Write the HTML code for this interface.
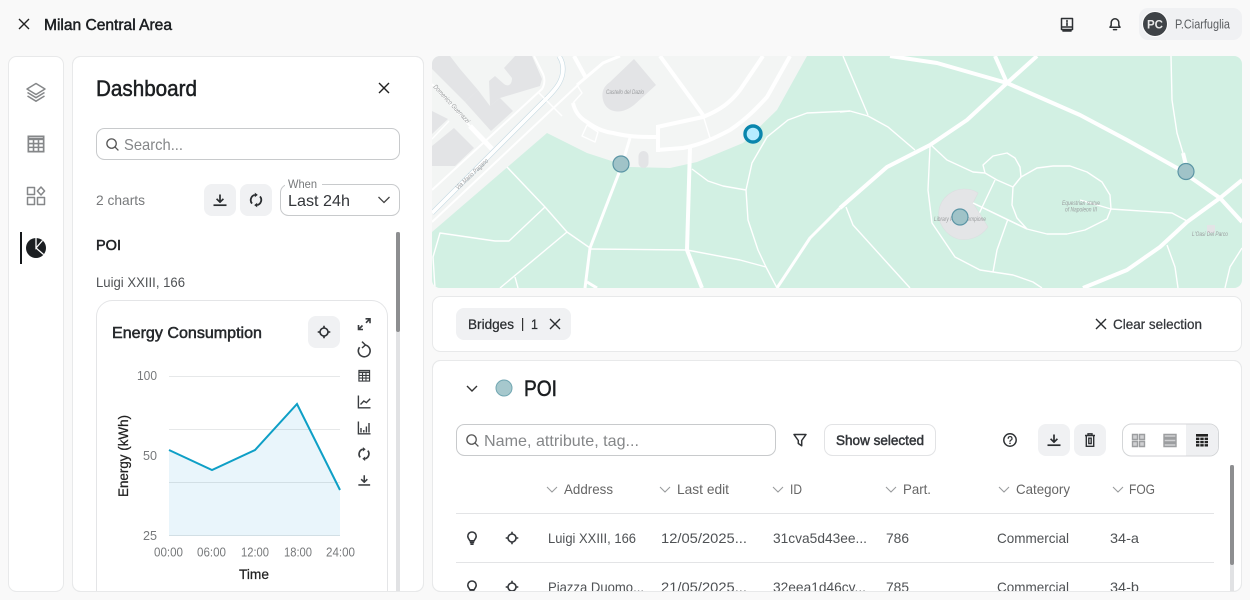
<!DOCTYPE html>
<html lang="en"><head><meta charset="utf-8"><title>Milan Central Area</title>
<style>
html,body{margin:0;padding:0;background:#f9f9f9;width:1250px;height:600px;overflow:hidden}
svg{display:block;font-family:"Liberation Sans",sans-serif}
.m{stroke:currentColor;stroke-width:.25}
.s{stroke:currentColor;stroke-width:.5}
.h{fill:#666;font-size:14px}
.c{fill:#4f5255;font-size:14px}
.ic{fill:none;stroke:#2e3134;stroke-width:1.5;stroke-linecap:round;stroke-linejoin:round}
.g{fill:none;stroke:#858789;stroke-width:1.5;stroke-linejoin:round}
.r4{fill:none;stroke:#fff;stroke-width:4;stroke-linejoin:round;stroke-linecap:butt}
.r3{fill:none;stroke:#fff;stroke-width:3;stroke-linejoin:round}
.r2{fill:none;stroke:#fff;stroke-width:2;stroke-linejoin:round}
.r1{fill:none;stroke:#fff;stroke-width:1.4;stroke-linejoin:round}
.b{fill:#e3e4e6}
.mt{fill:#9a9c9e;font-size:6.5px;font-style:italic}
.btn{fill:#f0f1f3}
.box{fill:#fff;stroke:#c8cacc}
.p{fill:#fff;stroke:#e8e9ea}
</style></head>
<body>
<svg width="1250" height="600" viewBox="0 0 1250 600" xmlns="http://www.w3.org/2000/svg">
<defs>
<clipPath id="mapc"><rect x="432" y="56" width="810" height="232" rx="8"/></clipPath>
<clipPath id="panc"><rect x="72" y="56" width="352" height="535" rx="8"/></clipPath>
<clipPath id="tabc"><rect x="432" y="360" width="810" height="231" rx="8"/></clipPath>
<symbol id="dl" viewBox="0 0 16 16" overflow="visible"><path d="M8 2.5V10M4.6 6.8L8 10.2 11.4 6.8" fill="none" stroke="currentColor" stroke-width="1.7" stroke-linejoin="round"/><path d="M1.5 13.2H14.5" stroke="currentColor" stroke-width="1.7" fill="none"/></symbol>
<symbol id="rf" viewBox="0 0 16 16" overflow="visible"><path d="M4 11.6A5.4 5.4 0 0 1 6.8 2.9M12 4.4A5.4 5.4 0 0 1 9.2 13.1" fill="none" stroke="currentColor" stroke-width="1.8"/><path d="M6.8 .6L9.8 2.9 6.8 5.3ZM9.2 10.7L6.2 13.1 9.2 15.4Z" fill="currentColor"/></symbol>
<symbol id="tg" viewBox="0 0 16 16" overflow="visible"><circle cx="8" cy="8" r="4" fill="none" stroke="currentColor" stroke-width="1.6"/><path d="M8 1.7V4M8 12V14.3M1.7 8H4M12 8H14.3" stroke="currentColor" stroke-width="1.6" fill="none"/></symbol>
<symbol id="bu" viewBox="0 0 16 16" overflow="visible"><path d="M5.8 10.8C5.6 9.5 3.8 8.6 3.8 6.2A4.2 4.2 0 0 1 12.2 6.2C12.2 8.6 10.4 9.5 10.2 10.8Z" fill="none" stroke="currentColor" stroke-width="1.6" stroke-linejoin="round"/><path d="M5.8 12.4H10.2M6.4 14.2H9.6" stroke="currentColor" stroke-width="1.6" fill="none"/></symbol>
<symbol id="xx" viewBox="0 0 16 16" overflow="visible"><path d="M3 3L13 13M13 3L3 13" stroke="currentColor" stroke-width="1.4" fill="none"/></symbol>
<symbol id="ta" viewBox="0 0 16 16" overflow="visible"><path d="M1.2 1.2H14.8V14.8H1.2Z" fill="none" stroke="currentColor" stroke-width="1.5"/><path d="M1.2 2.5H14.8V4.6H1.2Z" fill="currentColor"/><path d="M1.2 7.6H14.8M1.2 11H14.8M5.8 4.3V14.8M10.2 4.3V14.8" fill="none" stroke="currentColor" stroke-width="1.4"/></symbol>
<symbol id="se" viewBox="0 0 16 16" overflow="visible"><circle cx="7" cy="7" r="5" fill="none" stroke="currentColor" stroke-width="1.4"/><path d="M10.6 10.6L14.3 14.3" stroke="currentColor" stroke-width="1.4"/></symbol>
</defs>

<rect width="1250" height="600" fill="#f9f9f9"/>

<!-- top bar -->
<use href="#xx" x="16" y="16" width="16" height="16" color="#222"/>
<text x="44" y="30" font-size="16" class="s" fill="#1c1f22" color="#1c1f22" textLength="128" lengthAdjust="spacingAndGlyphs">Milan Central Area</text>
<g class="ic"><path d="M1061.5 18.5H1072.5V29.5H1061.5ZM1061.5 27H1072.5M1063 29.5V31H1071V29.5"/><path d="M1067 20.5V21.6M1067 23V25.4" stroke-width="1.6"/></g>
<g class="ic"><path d="M1110 27.2H1120L1118.8 25.3V22.6A3.8 3.8 0 0 0 1111.2 22.6V25.3Z"/><path d="M1113.5 29.6H1116.5" stroke-width="1.5"/></g>
<rect x="1139" y="8" width="103" height="32" rx="9" fill="#f0f1f3"/>
<circle cx="1155" cy="24" r="13" fill="#fff"/><circle cx="1155" cy="24" r="12" fill="#3f4347"/>
<text x="1147" y="28.5" font-size="12" fill="#e8e8e8" font-weight="700" textLength="16" lengthAdjust="spacingAndGlyphs">PC</text>
<text x="1175" y="28.5" font-size="12.5" fill="#5a5d60" textLength="55" lengthAdjust="spacingAndGlyphs">P.Ciarfuglia</text>

<!-- rail -->
<rect class="p" x="8.5" y="56.5" width="55" height="535" rx="8"/>
<g class="g">
<path d="M36 83.5L45 89 36 94.5 27 89Z"/><path d="M27.5 92.5L36 97.7 44.5 92.5M27.5 96L36 101.2 44.5 96"/>
</g>
<use href="#ta" x="27" y="135" width="18" height="18" color="#858789"/>
<g class="g"><rect x="27.5" y="187.5" width="7" height="7"/><rect x="27.5" y="197.5" width="7" height="7"/><rect x="37.5" y="197.5" width="7" height="7"/><path d="M41 187L44.6 191 41 195 37.4 191Z"/></g>
<rect x="20" y="232" width="2" height="32" fill="#15181b"/>
<circle cx="36" cy="248" r="10" fill="#1b1e21"/>
<path d="M36 238V248L42.5 240.5M36 248L43.6 254.5" fill="none" stroke="#fff" stroke-width="1.3"/>

<!-- dashboard panel -->
<rect class="p" x="72.5" y="56.5" width="351" height="535" rx="8"/>
<text x="96" y="96" font-size="22" class="s" fill="#1b1e21" color="#1b1e21" textLength="101" lengthAdjust="spacingAndGlyphs">Dashboard</text>
<use href="#xx" x="376" y="80" width="16" height="16" color="#222"/>
<rect class="box" x="96.5" y="128.5" width="303" height="31" rx="8"/>
<use href="#se" x="105" y="137" width="15" height="15" color="#555"/>
<text x="124" y="150" font-size="16" fill="#858789" textLength="59" lengthAdjust="spacingAndGlyphs">Search...</text>
<text x="96" y="205" font-size="14" fill="#77797b" textLength="49" lengthAdjust="spacingAndGlyphs">2 charts</text>
<rect class="btn" x="204" y="184" width="32" height="32" rx="8"/>
<use href="#dl" x="212" y="192" width="16" height="16" color="#2a2d30"/>
<rect class="btn" x="240" y="184" width="32" height="32" rx="8"/>
<use href="#rf" x="248" y="192" width="16" height="16" color="#2a2d30"/>
<rect class="box" x="280.5" y="184.5" width="119" height="31" rx="8"/>
<rect x="285" y="182" width="37" height="5" fill="#fff"/>
<text x="288" y="188" font-size="12" fill="#77797b" textLength="29" lengthAdjust="spacingAndGlyphs">When</text>
<text x="288" y="206" font-size="16" fill="#33363a" textLength="62" lengthAdjust="spacingAndGlyphs">Last 24h</text>
<path d="M378.5 197L384 202.5 389.5 197" fill="none" stroke="#444" stroke-width="1.3"/>
<text x="96" y="250" font-size="15" class="s" fill="#1f2225" color="#1f2225" textLength="25" lengthAdjust="spacingAndGlyphs">POI</text>
<text x="96" y="287" font-size="14" fill="#4f5255" textLength="89" lengthAdjust="spacingAndGlyphs">Luigi XXIII, 166</text>
<rect x="396" y="232" width="4" height="359" fill="#e1e2e4"/>
<rect x="396" y="232" width="4" height="100" rx="2" fill="#8d8e90"/>

<g clip-path="url(#panc)">
<rect x="96.5" y="300.5" width="291" height="320" rx="16" fill="#fff" stroke="#e4e5e7"/>
<text x="112" y="338" font-size="16" fill="#25282b" class="s" color="#25282b" textLength="150" lengthAdjust="spacingAndGlyphs">Energy Consumption</text>
<rect class="btn" x="308" y="316" width="32" height="32" rx="8"/>
<use href="#tg" x="316" y="324" width="16" height="16" color="#2a2d30"/>
<g color="#3a3d40">
<path d="M358.5 325V329.5H363M358.8 329.2L362.5 325.5M365.5 318.8H370V323.3M369.8 319L366 322.8" fill="none" stroke="currentColor" stroke-width="1.6"/>
<path d="M359.6 347.2A5.9 5.9 0 1 0 364.8 345" fill="none" stroke="currentColor" stroke-width="1.6"/>
<path d="M362 341.6L365.4 345 362 348" fill="none" stroke="currentColor" stroke-width="1.5"/>
<use href="#ta" x="358" y="369.5" width="12.5" height="12.5"/>
<path d="M358.4 395.5V407.8H370.5M360.5 404.5L363.8 401 366.4 402.6 370.2 398.8" fill="none" stroke="currentColor" stroke-width="1.4"/>
<path d="M358.4 421.5V433.8H370.5M361 432.5V428M363.8 432.5V430M366.4 432.5V426.5M369 432.5V423" fill="none" stroke="currentColor" stroke-width="1.4"/>
<use href="#rf" x="356.5" y="446.5" width="15" height="15"/>
<use href="#dl" x="357" y="473" width="14.5" height="14.5"/>
</g>
<!-- chart -->
<path d="M169 450L212 470 255 450 297 404 340 490V536H169Z" fill="#e9f5fb"/>
<path d="M169 376.5H340M169 429.5H340M169 482.5H340M169 535.5H340" stroke="#1a2a3a" stroke-opacity=".11" stroke-width="1" fill="none"/>
<path d="M169 450L212 470 255 450 297 404 340 490" fill="none" stroke="#0e9fc6" stroke-width="2" stroke-linejoin="miter"/>
<g font-size="13" fill="#77797b">
<text x="137" y="380" textLength="20" lengthAdjust="spacingAndGlyphs">100</text>
<text x="143" y="460" textLength="14" lengthAdjust="spacingAndGlyphs">50</text>
<text x="143" y="540" textLength="14" lengthAdjust="spacingAndGlyphs">25</text>
<text x="154" y="556.5" textLength="29" lengthAdjust="spacingAndGlyphs">00:00</text>
<text x="197" y="556.5" textLength="29" lengthAdjust="spacingAndGlyphs">06:00</text>
<text x="241" y="556.5" textLength="28" lengthAdjust="spacingAndGlyphs">12:00</text>
<text x="284" y="556.5" textLength="28" lengthAdjust="spacingAndGlyphs">18:00</text>
<text x="326" y="556.5" textLength="29" lengthAdjust="spacingAndGlyphs">24:00</text>
</g>
<text x="239" y="579" font-size="14" fill="#222" class="m" color="#222" textLength="30" lengthAdjust="spacingAndGlyphs">Time</text>
<text transform="translate(128,497) rotate(-90)" font-size="14" fill="#222" class="m" color="#222" textLength="82" lengthAdjust="spacingAndGlyphs">Energy (kWh)</text>
</g>

<!-- map -->
<g clip-path="url(#mapc)">
<rect x="432" y="56" width="810" height="232" fill="#d2f0e3"/>
<path d="M432 56H807L777 110 743 143 697 162 670 168 630 167 587 153 547 133 432 232Z" fill="#f3f5f4"/>
<g class="b">
<path d="M432 56H450L460 69 478 90 465 102 432 69Z"/>
<path d="M465 102L478 90 490 106 500 98 513 111 491 131Z"/>
<path d="M489 81L495 76 504 84C508 87 512 85 512 78L504 68 515 56H532L542 79 540 86 500 98 490 106Z"/>
<path d="M432 99V111L448 119 432 134Z"/>
<path d="M432 146L454 128 474 148 455 166H432Z"/>
<path d="M634 59L656 85 634 105C620 116 606 112 603 100 601 92 604 86 610 82Z"/>
<rect x="638.5" y="151" width="10" height="17" rx="5"/>
</g>
<g fill="none" stroke-linejoin="round">
<path class="r2" d="M432 84L470 126"/>
<path fill="none" stroke="#fff" stroke-width="5" d="M470 126L492 149"/>
<path class="r1" d="M432 139L449 121"/>
<path class="r2" d="M432 190L542 89C545 84 545 78 543 74L534 56"/>
<path d="M432 213L547 98C557 88 563 80 563 69 563 63 561 59 559 56" fill="none" stroke="#c6dae2" stroke-width="5"/>
<path d="M432 213L547 98C557 88 563 80 563 69 563 63 561 59 559 56" fill="none" stroke="#fff" stroke-width="3.8"/>
<path class="r2" d="M432 222L579 84"/>
<path class="r1" d="M539 93L562 116"/>
<path class="r1" d="M577 85L582 93 573 103M587 125L598 132 595 142 582 136Z"/>
<path class="r4" d="M630 138L622 165 590 248 585 288" style="stroke-width:3"/>
<path class="r4" d="M573 103C575 112 580 118 587 122 598 130 606 132 613 133 630 137 640 137 657 137"/>
<path class="r4" d="M658 125V152"/>
<path class="r4" d="M657 127L703 117C720 110 730 103 740 90L763 56"/>
<path class="r4" d="M657 150L683 148C700 145 715 138 730 130 745 120 755 110 767 97L790 56"/>
<path class="r4" d="M690 148L687 250 702 288"/>
<path class="r4" d="M574 56L586 78"/>
<path class="r3" d="M577 85L603 63 620 56"/>
<path class="r4" d="M660 56L703 115"/>
<path class="r1" d="M703 115L710 138"/>
<path class="r1" d="M507 167L545 207 567 232 590 248"/>
<path class="r1" d="M545 207L509 241H495L440 233 433 257 435 288M567 232L500 288M515 277L518 288M590 249L687 250"/>
<path class="r1" d="M687 250L740 260 766 267 777 288M692 169L708 181 723 186 746 190"/>
<path class="r1" d="M850 111L807 113 788 120 767 137 752 163 746 190 748 220 758 250 766 267"/>
<path class="r3" d="M840 208L810 238 777 288"/>
<path class="r3" d="M587 282L597 288"/>
<path class="r4" d="M890 56L937 63 1007 83 1080 115 1127 140 1177 168 1220 198 1242 222"/>
<path class="r4" d="M995 56L1007 83"/>
<path class="r4" d="M1037 56L1007 83 967 120 930 145 887 167 840 208"/>
<path class="r1" d="M843 56L868 115M840 112L850 111 868 116 888 127 915 150"/>
<path class="r1" d="M930 147L928 190 932 223 955 257 980 270 1013 275 1033 282 1042 288"/>
<path class="r1" d="M932 146L947 160 973 172 985 173 997 180 1013 187"/>
<path class="r1" d="M985 173L983 165 993 156 1007 153 1015 158 1020 167 1021 177 1013 187"/>
<path class="r1" d="M1013 187L1021 177 1037 168 1053 166 1070 166 1087 172 1102 182 1110 195 1111 209 1107 219 1085 230 1067 234 1047 234 1027 229 1017 218 1012 205Z"/>
<path class="r1" d="M1080 200L1111 209 1172 213 1187 221M973 203L1027 229M995 180L977 218M1008 219L997 250 993 272M846 207L853 225 910 288"/>
<path class="r4" d="M1083 288L1127 270 1160 247 1187 222 1220 198 1242 180"/>
<path class="r1" d="M1167 245L1175 267 1178 288M1242 248L1230 267 1225 288M1171 56L1172 100 1177 133 1183 153"/>
<path class="r4" d="M1183 153L1186 165"/>
</g>
<path d="M978 193L973 203 988 227C980 238 968 241 958 239 945 235 937 222 939 210 941 198 952 189 964 189 969 189 974 190 978 193Z" fill="#e4e5e7" stroke="#dcdee0" stroke-width=".6"/>
<path d="M973 203L1027 229" class="r1"/>
<text class="mt" x="606" y="94" textLength="38" lengthAdjust="spacingAndGlyphs">Castello del Dazio</text>
<text class="mt" transform="translate(433,87) rotate(47)" textLength="50" lengthAdjust="spacingAndGlyphs">Domenico Guerrazzi</text>
<text class="mt" transform="translate(458,190) rotate(-43)" textLength="42" lengthAdjust="spacingAndGlyphs">Via Mario Pagano</text>
<text class="mt" x="934" y="221" textLength="52" lengthAdjust="spacingAndGlyphs">Library Parco Sempione</text>
<text class="mt" x="1062" y="205" textLength="38" lengthAdjust="spacingAndGlyphs">Equestrian statue</text>
<text class="mt" x="1065" y="211.5" textLength="32" lengthAdjust="spacingAndGlyphs">of Napoleon III</text>
<rect x="1207" y="225" width="8" height="8" fill="#e3e4e6"/>
<text class="mt" x="1192" y="236" textLength="36" lengthAdjust="spacingAndGlyphs">L'Oasi Del Parco</text>
<g fill="#a0c3c8" stroke="#5b95a5" stroke-width="1.2">
<circle cx="621" cy="164" r="8"/><circle cx="960" cy="217" r="8"/><circle cx="1186" cy="171.5" r="8"/>
</g>
<circle cx="753" cy="134" r="8" fill="#b7ecff" stroke="#0a86ad" stroke-width="3.4"/>
</g>

<!-- selection bar -->
<rect class="p" x="432.5" y="296.5" width="809" height="55" rx="8"/>
<rect class="btn" x="456" y="308" width="115" height="32" rx="8"/>
<text x="468" y="329" font-size="14" fill="#2a2d30" class="m" color="#2a2d30" textLength="46" lengthAdjust="spacingAndGlyphs">Bridges</text>
<rect x="522" y="318" width="1.2" height="13" fill="#333"/>
<text x="531" y="329" font-size="14" fill="#2a2d30" class="m" color="#2a2d30" textLength="7" lengthAdjust="spacingAndGlyphs">1</text>
<use href="#xx" x="547" y="316" width="16" height="16" color="#2a2d30"/>
<use href="#xx" x="1093" y="316" width="16" height="16" color="#2a2d30"/>
<text x="1113" y="329" font-size="14" fill="#33363a" class="m" color="#33363a" textLength="89" lengthAdjust="spacingAndGlyphs">Clear selection</text>

<!-- table panel -->
<rect class="p" x="432.5" y="360.5" width="809" height="231" rx="8"/>
<g clip-path="url(#tabc)">
<path d="M467 386L472 391 477 386" fill="none" stroke="#333" stroke-width="1.4"/>
<circle cx="504" cy="388" r="8" fill="#a6c8cd" stroke="#72a7b2" stroke-width="1"/>
<text x="524" y="396" font-size="22" fill="#1b1e21" class="s" color="#1b1e21" textLength="33" lengthAdjust="spacingAndGlyphs">POI</text>
<rect class="box" x="456.5" y="424.5" width="319" height="31" rx="8"/>
<use href="#se" x="465" y="433" width="15" height="15" color="#555"/>
<text x="484" y="446" font-size="16" fill="#858789" textLength="155" lengthAdjust="spacingAndGlyphs">Name, attribute, tag...</text>
<path d="M794 434.5H806L801.7 440.5V445.8L798.3 443.5V440.5Z" class="ic" stroke-width="1.5"/>
<rect x="824.5" y="424.5" width="111" height="31" rx="8" fill="#fff" stroke="#e2e3e5"/>
<text x="836" y="445" font-size="14" fill="#33363a" class="s" color="#33363a" textLength="88" lengthAdjust="spacingAndGlyphs">Show selected</text>
<circle cx="1010" cy="440" r="6.2" class="ic"/>
<path d="M1008.2 438.4A1.9 1.9 0 1 1 1010.6 440.3C1010.2 440.5 1010 440.8 1010 441.4" class="ic" style="stroke-width:1.2"/><circle cx="1010" cy="443.3" r=".8" fill="#2e3134"/>
<rect class="btn" x="1038" y="424" width="32" height="32" rx="8"/>
<use href="#dl" x="1046" y="432" width="16" height="16" color="#2a2d30"/>
<rect class="btn" x="1074" y="424" width="32" height="32" rx="8"/>
<path d="M1085 435.5H1095M1086.3 435.5V446.3H1093.7V435.5M1088 435.5V433.8H1092V435.5M1088.8 438.2V443.6H1091.2V438.2Z" fill="none" stroke="#2e3134" stroke-width="1.4"/>
<rect x="1122.5" y="424" width="96" height="32" rx="9" fill="#fff" stroke="#d4d6d8"/>
<path d="M1186 424.5H1209A9 9 0 0 1 1218 433.5V446.5A9 9 0 0 1 1209 455.5H1186Z" fill="#eff0f2"/>
<g fill="#d0d1d3" stroke="#9c9ea0" stroke-width="1.4">
<path d="M1132.5 434.5h5v5h-5zM1139.5 434.5h5v5h-5zM1132.5 441.5h5v5h-5zM1139.5 441.5h5v5h-5z"/>
<path d="M1164 434.5h12v3h-12zM1164 439h12v3h-12zM1164 443.5h12v3h-12z"/>
</g>
<path d="M1196 434h12v2.6h-12z" fill="#222"/>
<path d="M1196 437.6h3.4v2.4h-3.4zM1200.3 437.6h3.4v2.4h-3.4zM1204.6 437.6h3.4v2.4h-3.4zM1196 440.9h3.4v2.4h-3.4zM1200.3 440.9h3.4v2.4h-3.4zM1204.6 440.9h3.4v2.4h-3.4zM1196 444.1h3.4v2.4h-3.4zM1200.3 444.1h3.4v2.4h-3.4zM1204.6 444.1h3.4v2.4h-3.4z" fill="#222"/>

<path d="M547 487L552 492 557 487M660 487L665 492 670 487M773 487L778 492 783 487M886 487L891 492 896 487M999 487L1004 492 1009 487M1113 487L1118 492 1123 487" fill="none" stroke="#9a9c9e" stroke-width="1.1"/>
<text class="h" x="564" y="494" textLength="49" lengthAdjust="spacingAndGlyphs">Address</text>
<text class="h" x="677" y="494" textLength="52" lengthAdjust="spacingAndGlyphs">Last edit</text>
<text class="h" x="790" y="494" textLength="12" lengthAdjust="spacingAndGlyphs">ID</text>
<text class="h" x="903" y="494" textLength="28" lengthAdjust="spacingAndGlyphs">Part.</text>
<text class="h" x="1016" y="494" textLength="54" lengthAdjust="spacingAndGlyphs">Category</text>
<text class="h" x="1129" y="494" textLength="26" lengthAdjust="spacingAndGlyphs">FOG</text>
<path d="M456 513.5H1214M456 562.5H1214" stroke="#e3e4e6" fill="none"/>
<use href="#bu" x="464" y="530" width="16" height="16" color="#33363a"/>
<use href="#tg" x="504" y="530" width="16" height="16" color="#33363a"/>
<text class="c" x="548" y="543" textLength="88" lengthAdjust="spacingAndGlyphs">Luigi XXIII, 166</text>
<text class="c" x="661" y="543" textLength="86" lengthAdjust="spacingAndGlyphs">12/05/2025...</text>
<text class="c" x="773" y="543" textLength="94" lengthAdjust="spacingAndGlyphs">31cva5d43ee...</text>
<text class="c" x="886" y="543" textLength="23" lengthAdjust="spacingAndGlyphs">786</text>
<text class="c" x="997" y="543" textLength="72" lengthAdjust="spacingAndGlyphs">Commercial</text>
<text class="c" x="1110" y="543" textLength="29" lengthAdjust="spacingAndGlyphs">34-a</text>
<use href="#bu" x="464" y="579" width="16" height="16" color="#33363a"/>
<use href="#tg" x="504" y="579" width="16" height="16" color="#33363a"/>
<text class="c" x="548" y="592" textLength="96" lengthAdjust="spacingAndGlyphs">Piazza Duomo...</text>
<text class="c" x="661" y="592" textLength="86" lengthAdjust="spacingAndGlyphs">21/05/2025...</text>
<text class="c" x="773" y="592" textLength="93" lengthAdjust="spacingAndGlyphs">32eea1d46cv...</text>
<text class="c" x="886" y="592" textLength="23" lengthAdjust="spacingAndGlyphs">785</text>
<text class="c" x="997" y="592" textLength="72" lengthAdjust="spacingAndGlyphs">Commercial</text>
<text class="c" x="1110" y="592" textLength="29" lengthAdjust="spacingAndGlyphs">34-b</text>
<rect x="1230" y="465" width="4" height="126" fill="#e1e2e4"/>
<rect x="1230" y="465" width="4" height="100" rx="2" fill="#8d8e90"/>
</g>
<rect x="432.5" y="360.5" width="809" height="231" rx="8" fill="none" stroke="#e8e9ea"/>
<rect x="72.5" y="56.5" width="351" height="535" rx="8" fill="none" stroke="#e8e9ea"/>
</svg>
</body></html>
